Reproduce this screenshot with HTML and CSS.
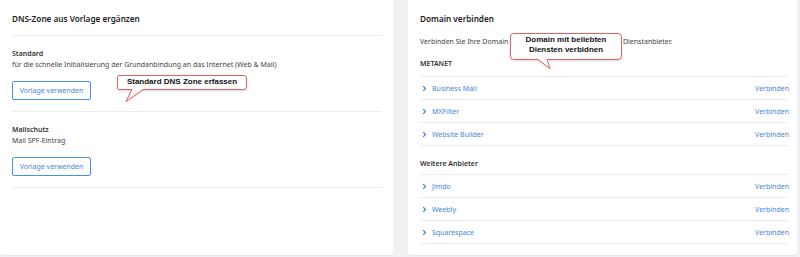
FILE: index.html
```html
<!DOCTYPE html>
<html lang="de">
<head>
<meta charset="utf-8">
<title>DNS</title>
<link rel="stylesheet" href="styles.css">
</head>
<body>
<div class="screen">
  <section class="card card-left">
    <h2 class="card-title with-rule">DNS-Zone aus Vorlage ergänzen</h2>
    <div class="tpl">
      <div class="tpl-name">Standard</div>
      <div class="tpl-desc">für die schnelle Initialisierung der Grundanbindung an das Internet (Web &amp; Mail)</div>
      <button class="btn">Vorlage verwenden</button>
    </div>
    <div class="tpl">
      <div class="tpl-name">Mailschutz</div>
      <div class="tpl-desc">Mail SPF-Eintrag</div>
      <button class="btn">Vorlage verwenden</button>
    </div>
  </section>

  <section class="card card-right">
    <h2 class="card-title">Domain verbinden</h2>
    <p class="intro">Verbinden Sie Ihre Domain mit Angeboten von ausgewählten Dienstanbieter.</p>
    <div class="group-title first">METANET</div>
    <ul class="list">
      <li class="row"><span class="name"><svg class="chev" viewBox="0 0 5 7" width="5" height="7"><polyline points="1.2,1.2 3.5,3.5 1.2,5.8"/></svg>Business Mail</span><a class="link">Verbinden</a></li>
      <li class="row"><span class="name"><svg class="chev" viewBox="0 0 5 7" width="5" height="7"><polyline points="1.2,1.2 3.5,3.5 1.2,5.8"/></svg>MXFilter</span><a class="link">Verbinden</a></li>
      <li class="row"><span class="name"><svg class="chev" viewBox="0 0 5 7" width="5" height="7"><polyline points="1.2,1.2 3.5,3.5 1.2,5.8"/></svg>Website Builder</span><a class="link">Verbinden</a></li>
    </ul>
    <div class="group-title">Weitere Anbieter</div>
    <ul class="list">
      <li class="row"><span class="name"><svg class="chev" viewBox="0 0 5 7" width="5" height="7"><polyline points="1.2,1.2 3.5,3.5 1.2,5.8"/></svg>Jimdo</span><a class="link">Verbinden</a></li>
      <li class="row"><span class="name"><svg class="chev" viewBox="0 0 5 7" width="5" height="7"><polyline points="1.2,1.2 3.5,3.5 1.2,5.8"/></svg>Weebly</span><a class="link">Verbinden</a></li>
      <li class="row"><span class="name"><svg class="chev" viewBox="0 0 5 7" width="5" height="7"><polyline points="1.2,1.2 3.5,3.5 1.2,5.8"/></svg>Squarespace</span><a class="link">Verbinden</a></li>
    </ul>
  </section>

  <div class="callout callout-one">
    <svg class="bubble" width="134" height="31" viewBox="0 0 134 31"><path d="M4,2.5 H129 Q131.5,2.5 131.5,5 V14 Q131.5,16.5 129,16.5 H28 L11,28.5 L17,16.5 H4 Q2.5,16.5 2.5,14 V5 Q2.5,2.5 4,2.5 Z"/></svg>
    <div class="callout-text one">Standard DNS Zone erfassen</div>
  </div>

  <div class="callout callout-two">
    <svg class="bubble" width="116" height="40" viewBox="0 0 116 40"><path d="M5.5,2.5 H110 Q113.5,2.5 113.5,6 V25 Q113.5,28.5 110,28.5 H39 L42,37.5 L30,28.5 H5.5 Q2.5,28.5 2.5,25 V6 Q2.5,2.5 5.5,2.5 Z"/></svg>
    <div class="callout-text two">Domain mit beliebten<br>Diensten verbidnen</div>
  </div>
</div>
</body>
</html>
```

FILE: styles.css
```css
* { box-sizing: border-box; }

html, body {
  margin: 0;
  padding: 0;
  background: #eff1f4;
}

body {
  font-family: "Noto Sans", "Open Sans", "DejaVu Sans", sans-serif;
  color: #333;
  font-size: 7px;
}

.screen {
  position: relative;
  width: 800px;
  height: 257px;
  display: flex;
  gap: 15px;
  padding-right: 3px;
}

.card {
  background: #fff;
  height: 255px;
  border-radius: 0 0 3px 3px;
  box-shadow: 0 1px 1px rgba(0, 0, 0, 0.06);
}

.card-left {
  width: 393px;
  padding: 0 11px 0 12px;
}

.card-right {
  width: 389px;
  padding: 11px 8px 0 12px;
}

.card-title {
  margin: 0;
  font-size: 8.2px;
  font-weight: 600;
  color: #222;
  line-height: 15px;
}

.card-left .card-title {
  padding-top: 11px;
  height: 36px;
  border-bottom: 1px solid #ebedf0;
}

.tpl {
  padding-top: 12px;
  padding-bottom: 11px;
  border-bottom: 1px solid #ebedf0;
}

.tpl-name {
  font-weight: 600;
  line-height: 11px;
  color: #333;
}

.tpl-desc {
  line-height: 11px;
  color: #444;
}

.btn {
  display: block;
  margin-top: 11px;
  height: 19px;
  width: 79px;
  padding: 0;
  background: #fff;
  border: 1px solid #4a90e2;
  border-radius: 2px;
  color: #3f86da;
  font-family: inherit;
  font-size: 7px;
  line-height: 17px;
}

.intro {
  margin: 10px 0 0;
  line-height: 11px;
  color: #444;
}

.group-title {
  font-weight: 600;
  line-height: 11px;
  color: #333;
  padding: 12px 0 5px;
}

.group-title.first {
  padding: 11px 0 7px;
}

.list {
  list-style: none;
  margin: 0;
  padding: 0;
  border-top: 1px solid #ebedf0;
}

.row {
  height: 23px;
  display: flex;
  align-items: center;
  justify-content: space-between;
  border-bottom: 1px solid #ebedf0;
  color: #3f86da;
}

.name {
  display: flex;
  align-items: center;
}

.chev {
  margin: 0 5px 0 2px;
  fill: none;
  stroke: #3f7fcf;
  stroke-width: 1.1;
}

.link {
  color: #3f86da;
}

.callout {
  position: absolute;
}

.callout-one { left: 115px; top: 73px; width: 134px; height: 31px; }
.callout-two { left: 508px; top: 31px; width: 116px; height: 40px; }

.bubble {
  display: block;
  filter: drop-shadow(0 1px 1px rgba(0, 0, 0, 0.15));
}

.bubble path {
  fill: #fff;
  stroke: #e06464;
  stroke-width: 1;
}

.callout-text {
  position: absolute;
  font-family: "Liberation Sans", Arial, sans-serif;
  font-weight: 700;
  font-size: 8px;
  color: #111;
  text-align: center;
}

.callout-text.one {
  left: 2px; top: 2px; width: 130px; height: 14px;
  line-height: 14px;
}

.callout-text.two {
  left: 2px; top: 4px; width: 112px;
  line-height: 10px;
}
```
